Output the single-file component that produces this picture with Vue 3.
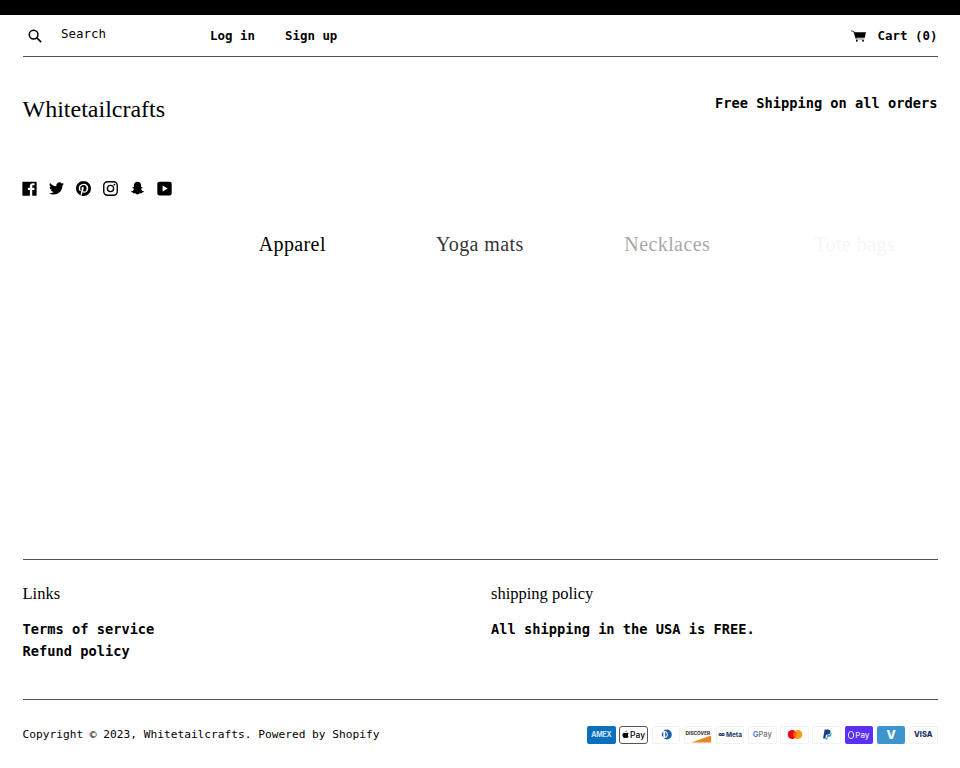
<template>
  <div class="page">
    <div class="top-bar"></div>
    <div class="wrap">
      <header class="site-header">
        <div class="search">
          <svg class="search-icon" viewBox="0 0 16 16" aria-hidden="true">
            <circle cx="6.400" cy="6.400" r="5" fill="none" stroke="#000" stroke-width="1.700" />
            <path d="M10 10l5 5" fill="none" stroke="#000" stroke-width="2" />
          </svg>
          <span class="search-label">Search</span>
        </div>
        <nav class="account">
          <a>Log in</a>
          <a>Sign up</a>
        </nav>
        <a class="cart">
          <svg class="cart-icon" viewBox="0 0 16 12" aria-hidden="true">
            <path d="M0 .2l3 .5.600 1.300H16l-1.300 5.800H5.600l.3 1h8.300v.7H5.200L2.500 1.300 0 .8z" />
            <circle cx="6.200" cy="11" r="1" />
            <circle cx="12.800" cy="11" r="1" />
          </svg>
          Cart (0)
        </a>
      </header>

      <div class="brand-row">
        <h1 class="brand">Whitetailcrafts</h1>
        <p class="promo">Free Shipping on all orders</p>
      </div>

      <div class="socials">
        <svg viewBox="0 0 24 24" aria-hidden="true">
          <path fill-rule="evenodd" d="M1.500 1h21a.9.9 0 01.9.9v20.800a.9.900 0 01-.9.900h-6.100v-9.200h3.100l.5-3.600h-3.600V8.500c0-1 .3-1.700 1.800-1.700h1.900V3.600c-.3 0-1.500-.1-2.800-.1-2.800 0-4.700 1.700-4.700 4.800v2.500H9.400v3.600h3.200v9.200H1.500a.9.900 0 01-.9-.9V1.900a.9.9 0 01.9-.9z" />
        </svg>
        <svg viewBox="0 0 24 24" aria-hidden="true">
          <path d="M23.953 4.57a10 10 0 01-2.825.775 4.958 4.958 0 002.163-2.723c-.951.555-2.005.959-3.127 1.184a4.92 4.92 0 00-8.384 4.482C7.69 8.095 4.067 6.13 1.64 3.162a4.822 4.822 0 00-.666 2.475c0 1.71.87 3.213 2.188 4.096a4.904 4.904 0 01-2.228-.616v.06a4.923 4.923 0 003.946 4.827 4.996 4.996 0 01-2.212.085 4.936 4.936 0 004.604 3.417 9.867 9.867 0 01-6.102 2.105c-.39 0-.779-.023-1.17-.067a13.995 13.995 0 007.557 2.209c9.053 0 13.998-7.496 13.998-13.985 0-.21 0-.42-.015-.63A9.935 9.935 0 0024 4.59z" />
        </svg>
        <svg viewBox="0 0 24 24" aria-hidden="true">
          <path d="M12.017 0C5.396 0 .029 5.367.029 11.987c0 5.079 3.158 9.417 7.618 11.162-.105-.949-.199-2.403.041-3.439.219-.937 1.406-5.957 1.406-5.957s-.359-.72-.359-1.781c0-1.663.967-2.911 2.168-2.911 1.024 0 1.518.769 1.518 1.688 0 1.029-.653 2.567-.992 3.992-.285 1.193.6 2.165 1.775 2.165 2.128 0 3.768-2.245 3.768-5.487 0-2.861-2.063-4.869-5.008-4.869-3.41 0-5.409 2.562-5.409 5.199 0 1.033.394 2.143.889 2.741.099.12.112.225.085.345-.09.375-.293 1.199-.334 1.363-.053.225-.172.271-.401.165-1.495-.69-2.433-2.878-2.433-4.646 0-3.776 2.748-7.252 7.92-7.252 4.158 0 7.392 2.967 7.392 6.923 0 4.135-2.607 7.462-6.233 7.462-1.214 0-2.354-.629-2.758-1.379l-.749 2.848c-.269 1.045-1.004 2.352-1.498 3.146 1.123.345 2.306.535 3.55.535 6.607 0 11.985-5.365 11.985-11.987C23.97 5.39 18.592.026 11.985.026L12.017 0z" />
        </svg>
        <svg viewBox="0 0 24 24" aria-hidden="true">
          <rect x="1.200" y="1.200" width="21.600" height="21.600" rx="6" fill="none" stroke="#000" stroke-width="2.200" />
          <circle cx="12" cy="12" r="5" fill="none" stroke="#000" stroke-width="2.200" />
          <circle cx="18.300" cy="5.700" r="1.500" />
        </svg>
        <svg viewBox="0 0 24 24" aria-hidden="true">
          <path d="M12 1.200c3.600 0 5.800 2.500 5.800 5.800 0 1 0 1.900-.1 2.700.8.300 1.700-.4 2.200.3.400.7-.5 1.400-1.700 1.900-.6.300-.6.600-.4 1.100.8 1.700 2.200 3 4.200 3.500.5.200.4.700 0 1-.7.400-1.700.6-2.500.8-.3.400-.2 1.100-.6 1.300-.7.200-1.900-.3-3 .1-1.100.4-2 1.700-3.900 1.700s-2.800-1.300-3.900-1.700c-1.100-.4-2.300.1-3-.1-.4-.2-.3-.9-.6-1.300-.8-.2-1.800-.4-2.500-.8-.4-.3-.5-.8 0-1 2-.5 3.400-1.800 4.200-3.500.2-.5.200-.8-.4-1.100-1.200-.5-2.100-1.200-1.700-1.900.5-.7 1.400 0 2.200-.3-.1-.8-.1-1.700-.1-2.700 0-3.300 2.200-5.800 5.800-5.800z" />
        </svg>
        <svg viewBox="0 0 24 24" aria-hidden="true">
          <path fill-rule="evenodd" d="M4 1h16c2.200 0 3.500 1.300 3.500 3.500v15c0 2.200-1.300 3.500-3.500 3.500H4C1.800 23 .5 21.700.5 19.500v-15C.5 2.300 1.800 1 4 1zM9 7.200v9.600l8-4.800z" />
        </svg>
      </div>

      <div class="collections">
        <a
          v-for="item in collections"
          :key="item.name"
          class="collection"
          :style="{ opacity: item.opacity }"
        >{{ item.name }}</a>
      </div>

      <footer class="site-footer">
        <div class="footer-cols">
          <div class="footer-col">
            <h4>Links</h4>
            <a>Terms of service</a>
            <a>Refund policy</a>
          </div>
          <div class="footer-col">
            <h4>shipping policy</h4>
            <a>All shipping in the USA is FREE.</a>
          </div>
        </div>
        <div class="footer-bottom">
          <p class="copyright">Copyright © 2023, Whitetailcrafts. Powered by Shopify</p>
          <div class="payments">
            <span class="pay amex">AMEX</span>
            <span class="pay apple">
              <svg viewBox="0 0 10 12" aria-hidden="true"><path d="M7 .3c0 .9-.8 2-1.900 2C5 1.300 6 .4 7 .3zM9.300 8.600c-.5 1.200-1.200 2.500-2.100 2.500-.8 0-1-.5-2-.5s-1.200.5-2 .5C2 11.100.6 8.600.6 6.600c0-2 1.300-3.200 2.600-3.200.9 0 1.500.6 2 .6s1.200-.7 2.200-.6c.5 0 1.600.2 2.200 1.200-1.700 1.100-1.400 3.300-.3 4z" /></svg>Pay
            </span>
            <span class="pay plain">
              <svg viewBox="0 0 18 12" aria-hidden="true">
                <circle cx="10" cy="6" r="5.500" fill="#1b5fa8" />
                <circle cx="7" cy="6" r="4" fill="#fff" />
                <path d="M6 3.200a3 3 0 000 5.600zM8 3.200v5.600a3 3 0 000-5.600z" fill="#1b5fa8" />
              </svg>
            </span>
            <span class="pay discover">DISCOVER<i></i></span>
            <span class="pay plain meta"><b>∞</b>Meta</span>
            <span class="pay plain gpay"><b>G</b>Pay</span>
            <span class="pay plain">
              <svg viewBox="0 0 18 12" aria-hidden="true">
                <circle cx="5.800" cy="6" r="5" fill="#eb001b" />
                <circle cx="12.200" cy="6" r="5" fill="#f79e1b" />
                <path d="M9 2.150a5 5 0 010 7.700 5 5 0 010-7.700z" fill="#ff5f00" />
              </svg>
            </span>
            <span class="pay plain">
              <svg viewBox="0 0 12 14" aria-hidden="true">
                <path d="M3 .5h4.200c2.400 0 3.600 1.300 3.200 3.400-.4 2.300-2 3.500-4.300 3.500H4.700L3.900 12H1z" fill="#253b80" />
                <path d="M10.800 3.800c.9.700 1.100 1.700.9 2.800-.4 2.200-1.800 3.300-4 3.300h-.9l-.6 3.600H3.700l.3-1.600h1.400l.7-4h1c2.400 0 3.800-1.400 3.700-4.100z" fill="#179bd7" />
              </svg>
            </span>
            <span class="pay shop">Pay</span>
            <span class="pay venmo">V</span>
            <span class="pay plain visa">VISA</span>
          </div>
        </div>
      </footer>
    </div>
  </div>
</template>

<script setup>
const collections = [
  { name: 'Apparel', opacity: 1 },
  { name: 'Yoga mats', opacity: 0.8 },
  { name: 'Necklaces', opacity: 0.35 },
  { name: 'Tote bags', opacity: 0.03 }
]
</script>

<style>
html,
body {
  background: #fff;
  overflow: hidden;
}
</style>

<style scoped>
.page {
  height: 768px;
  overflow: hidden;
  color: #000;
  font-family: 'DejaVu Sans Mono', monospace;
  font-size: 13.700px;
}

.top-bar {
  height: 15px;
  background: #000;
}

.wrap {
  padding: 0 22.500px;
}

a {
  color: #000;
  font-weight: 700;
}

.site-header {
  display: flex;
  align-items: center;
  height: 41px;
  border-bottom: 1px solid #555;
  font-size: 12.450px;
}

.search {
  display: flex;
  align-items: center;
  width: 187.500px;
  margin-top: -3px;
}

.search-icon {
  width: 14px;
  height: 14px;
  margin: 3px 0 0 5.500px;
}

.search-label {
  margin: -1px 0 0 19px;
  padding-bottom: 1px;
}

.account {
  display: flex;
  gap: 30px;
}

.cart {
  display: flex;
  align-items: center;
  margin-left: auto;
}

.cart-icon {
  width: 15px;
  height: 12px;
  margin-right: 12px;
}

.brand-row {
  display: flex;
  justify-content: space-between;
  height: 123px;
}

.brand {
  margin: 37px 0 0;
  font-family: 'Liberation Serif', serif;
  font-size: 24px;
  font-weight: 400;
  line-height: 30px;
}

.promo {
  margin: 37px 0 0;
  font-weight: 700;
  line-height: 18px;
}

.socials {
  display: flex;
  align-items: center;
  gap: 12px;
  height: 16px;
  margin-left: -0.700px;
}

.socials svg {
  width: 15px;
  height: 15px;
}

.collections {
  display: flex;
  margin: 33px -23px 0 176px;
  height: 30px;
  align-items: center;
}

.collection {
  flex: 0 0 187.500px;
  text-align: center;
  font-family: 'Liberation Serif', serif;
  font-size: 20px;
  font-weight: 400;
  letter-spacing: 0.400px;
}

.site-footer {
  margin-top: 300px;
  border-top: 1px solid #555;
}

.footer-cols {
  display: grid;
  grid-template-columns: 468.500px 1fr;
  height: 140px;
  border-bottom: 1px solid #555;
  padding-top: 24px;
  box-sizing: border-box;
}

.footer-col h4 {
  margin: 0 0 14px;
  font-family: 'Liberation Serif', serif;
  font-size: 16.500px;
  font-weight: 400;
  line-height: 20px;
}

.footer-col a {
  display: block;
  line-height: 22px;
}

.footer-bottom {
  display: flex;
  align-items: center;
  justify-content: space-between;
  height: 69px;
}

.copyright {
  margin: 0;
  font-size: 11.200px;
}

.payments {
  display: flex;
  gap: 3.700px;
}

.pay {
  display: flex;
  align-items: center;
  justify-content: center;
  width: 28.500px;
  height: 18px;
  box-sizing: border-box;
  border-radius: 2px;
  overflow: hidden;
  position: relative;
  font-family: 'Inter', sans-serif;
  font-size: 6px;
  font-weight: 700;
  white-space: nowrap;
}

.pay svg {
  height: 11px;
  width: 16px;
}

.plain {
  border: 1px solid #f2f2f2;
}

.amex {
  background: #0f6fbf;
  color: #cfe6f7;
  font-size: 7px;
  letter-spacing: -0.200px;
}

.apple {
  border: 1px solid #555;
  border-radius: 3px;
  font-size: 8.500px;
  font-weight: 500;
  gap: 1px;
}

.apple svg {
  width: 7px;
  height: 9px;
}

.discover {
  border: 1px solid #f2f2f2;
  color: #222;
  font-size: 4.800px;
  align-items: flex-start;
  padding-top: 3px;
}

.discover i {
  position: absolute;
  right: 0;
  bottom: 0;
  width: 20px;
  height: 7px;
  background: #e8872a;
  clip-path: polygon(100% 0, 100% 100%, 0 100%);
}

.meta {
  color: #1d3a6b;
  font-size: 6.500px;
  gap: 1px;
}

.gpay {
  color: #6b6b6b;
  font-size: 7.500px;
  font-weight: 500;
}

.gpay b {
  color: #4285f4;
}

.shop {
  background: #5a31f4;
  color: #e6e0ff;
  font-size: 8px;
  font-weight: 500;
}

.shop::before {
  content: '';
  width: 4px;
  height: 6px;
  margin-right: 1px;
  border: 1px solid #e6e0ff;
  border-radius: 3px;
}

.venmo {
  background: #3d95ce;
  color: #fff;
  font-size: 12px;
  font-weight: 800;
}

.visa {
  color: #1a2e63;
  font-size: 7.500px;
  font-weight: 800;
}
</style>
